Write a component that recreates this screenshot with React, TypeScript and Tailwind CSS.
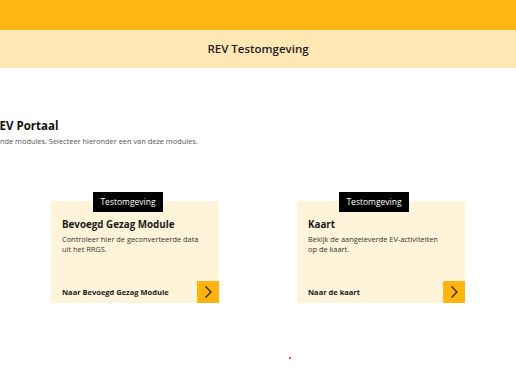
import React from "react";

interface Module {
  title: string;
  description: string[];
  link: string;
}

const modules: Module[] = [
  {
    title: "Bevoegd Gezag Module",
    description: ["Controleer hier de geconverteerde data", "uit het RRGS."],
    link: "Naar Bevoegd Gezag Module",
  },
  {
    title: "Kaart",
    description: ["Bekijk de aangeleverde EV-activiteiten", "op de kaart."],
    link: "Naar de kaart",
  },
];

const Chevron = () => (
  <svg width="10" height="14" viewBox="0 0 10 14" fill="none">
    <path d="M2.5 1.5 L8 7 L2.5 12.5" stroke="#1f1f1f" strokeWidth="1.2" />
  </svg>
);

const ModuleCard = ({ module }: { module: Module }) => (
  <div className="relative w-[168px] h-[102px] bg-[#fff3d9] flex flex-col">
    <div className="absolute -top-[9px] left-[42px] w-[70px] h-[20px] bg-black text-white text-[8.5px] flex items-center justify-center">
      Testomgeving
    </div>
    <div className="px-[11px] pt-[18px] flex-1 flex flex-col">
      <h2 className="text-[9.8px] font-bold text-[#1a1a1a] leading-[12px]">{module.title}</h2>
      <p className="mt-[3px] text-[7.4px] leading-[10px] text-[#333]">
        {module.description.map((line, i) => (
          <span key={i} className="block">{line}</span>
        ))}
      </p>
    </div>
    <div className="flex items-end justify-between pl-[11px]">
      <span className="text-[7.5px] font-bold text-[#1a1a1a] mb-[5px]">{module.link}</span>
      <button className="w-[22px] h-[22px] bg-[#ffb30f] flex items-center justify-center">
        <Chevron />
      </button>
    </div>
  </div>
);

export default function App() {
  return (
    <div className="w-[516px] h-[380px] overflow-hidden bg-white font-['Open_Sans',sans-serif] relative">
      <div className="h-[30px] bg-[#ffb612]" />
      <div className="h-[38px] bg-[#ffe7b4] flex items-center justify-center">
        <span className="text-[11.5px] font-semibold text-[#222]">REV Testomgeving</span>
      </div>
      <div className="pt-[51px]">
        <h1 className="-ml-[8px] text-[11.5px] font-bold text-[#111] leading-[14px]">REV Portaal</h1>
        <p className="mt-[3px] text-[7.4px] text-[#555] leading-[10px]">nde modules. Selecteer hieronder een van deze modules.</p>
      </div>
      <div className="mt-[55px] flex justify-center gap-[78px]">
        {modules.map((m) => (
          <ModuleCard key={m.title} module={m} />
        ))}
      </div>
      <div className="absolute left-[289px] top-[357px] w-[2px] h-[2px] bg-[#e05060]" />
    </div>
  );
}
